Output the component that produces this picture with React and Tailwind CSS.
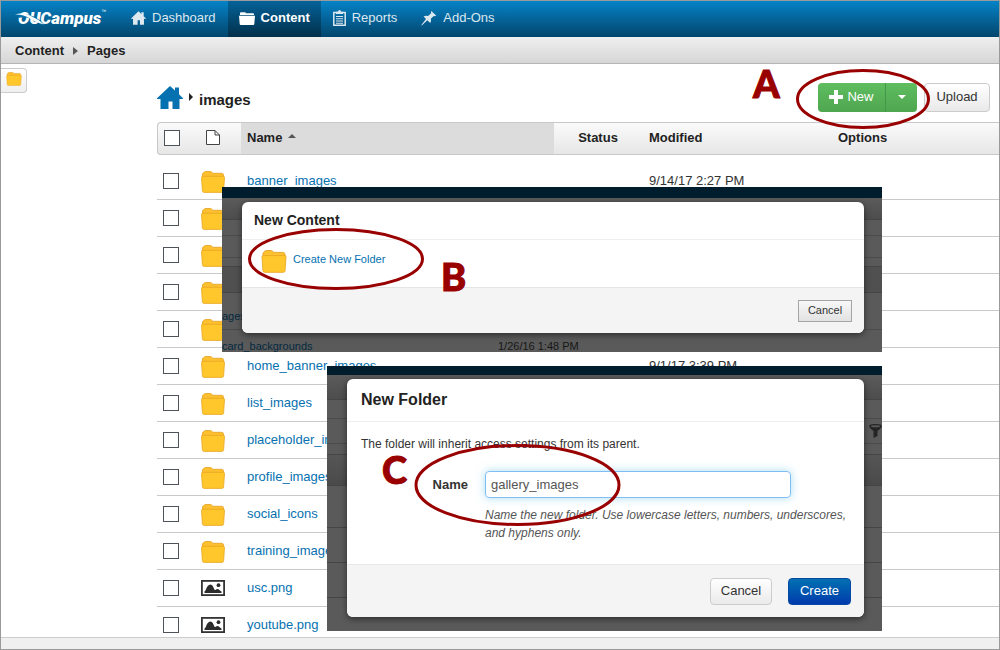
import React from "react";

const files = [
  { name: "banner_images", modified: "9/14/17 2:27 PM" },
  { name: "" },
  { name: "" },
  { name: "" },
  { name: "" },
  { name: "home_banner_images", modified: "9/1/17 3:39 PM" },
  { name: "list_images" },
  { name: "placeholder_images" },
  { name: "profile_images" },
  { name: "social_icons" },
  { name: "training_images" },
  { name: "usc.png", image: true },
  { name: "youtube.png", image: true },
];

function HomeIcon({ className }) {
  return (
    <svg viewBox="0 0 26 23" className={className} fill="currentColor" aria-hidden="true">
      <path d="M13 0 L18 4.6 V1.5 H22 V8.3 L26 12.2 V13 H22.5 V23 H15.5 V15.5 H11.5 V23 H3.5 V13 H0 V12.2 Z" />
    </svg>
  );
}

function SolidFolder({ className }) {
  return (
    <svg viewBox="0 0 16 13" className={className} fill="currentColor" aria-hidden="true">
      <path d="M1 3 V1.2 Q1 .3 2 .3 H6 Q6.8 .3 6.8 1.2 H14 Q15 1.2 15 2 V3 Z M0 3.8 H16 L15.3 12 Q15.2 13 14.2 13 H1.8 Q.8 13 .7 12 Z" />
    </svg>
  );
}

function ClipboardIcon({ className }) {
  return (
    <svg viewBox="0 0 13 16" className={className} aria-hidden="true">
      <path d="M.8 2.5 H12.2 V15.2 H.8 Z" fill="none" stroke="currentColor" strokeWidth="1.5" />
      <path d="M3 1.8 H5 Q5.2 0 6.5 0 Q7.800 0 8 1.8 H10 V4 H3 Z" fill="currentColor" />
      <path d="M3 6.500 H10 M3 8.800 H10 M3 11 H10 M3 13.200 H10" stroke="currentColor" strokeWidth="1.100" />
    </svg>
  );
}

function PinIcon({ className }) {
  return (
    <svg viewBox="0 0 16 15" className={className} fill="currentColor" aria-hidden="true">
      <path d="M10.300 0 L15.200 4.500 L13.600 5.200 L12.800 4.900 L9.800 7.800 Q10.600 10.200 9.200 12 L6.300 9.300 L1 14.300 L.3 14.600 L.7 13.600 L5 8 L2.600 5.600 Q4.600 4.200 7 5 L10.200 2.300 L9.900 1.400 Z" />
    </svg>
  );
}

function YellowFolder({ className }) {
  return (
    <svg viewBox="0 0 24 22" className={className} aria-hidden="true">
      <path
        d="M1.500 6 V3 Q1.500 2 2.700 1.800 L3.500 .8 Q4 .5 5 .5 H9.500 Q10.500 .5 11 1.500 L11.400 2.300 H20.500 Q22.500 2.300 22.500 4 V8 H1.500 Z"
        fill="#fdc02f"
        stroke="#e5a01f"
        strokeWidth=".8"
      />
      <path
        d="M.5 6.500 Q.4 5.300 1.700 5.300 H22.300 Q23.600 5.300 23.500 6.500 L22.600 19.800 Q22.400 21.400 20.900 21.400 H3.100 Q1.600 21.400 1.400 19.800 Z"
        fill="#ffc72c"
        stroke="#e8a623"
        strokeWidth=".8"
      />
    </svg>
  );
}

function ImageIcon({ className }) {
  return (
    <svg viewBox="0 0 24 16" className={className} aria-hidden="true">
      <rect x=".9" y=".9" width="22.200" height="14.200" fill="#fff" stroke="#333" strokeWidth="1.800" />
      <path d="M3.500 13 V11.500 Q5 10.500 5.500 8 Q6.500 5 9 4.500 Q11.500 4.500 12.500 7.500 Q13.300 10.300 14.500 10 Q16 8.300 17.500 9.300 Q19.500 11 20.500 11.500 V13 Z" fill="#2c2c2c" />
      <circle cx="17.500" cy="5.200" r="1.900" fill="#2c2c2c" />
    </svg>
  );
}

function Logo() {
  return (
    <a href="#" aria-label="OU Campus" className="relative flex h-[34px] w-[92px] items-center text-white">
      <span className="pl-[3px] font-['Roboto','Liberation_Sans',sans-serif] text-[17px] leading-none font-black italic">
        OUCampus
      </span>
      <span className="mb-3 text-[5px]">™</span>
      <svg viewBox="0 0 30 16" className="absolute top-2 left-0 h-4 w-[30px]" fill="none" aria-hidden="true">
        <path d="M3 7.500 Q15 4 27 15" stroke="#0570aa" strokeWidth="3" />
        <path d="M0 5.500 Q7 3 15 6.500 T29 15.500 Q20 13 14 9 T0 5.500" fill="#fff" />
      </svg>
    </a>
  );
}

const navItems = [
  { label: "Dashboard", icon: <HomeIcon className="h-[14px] w-[15px]" /> },
  { label: "Content", icon: <SolidFolder className="h-[13px] w-4" />, active: true },
  { label: "Reports", icon: <ClipboardIcon className="h-4 w-[13px]" /> },
  { label: "Add-Ons", icon: <PinIcon className="h-[15px] w-4" /> },
];

function Checkbox({ label }) {
  return (
    <input
      type="checkbox"
      aria-label={label}
      className="block size-4 appearance-none border border-[#4d5358] bg-white checked:bg-[#0671b0]"
    />
  );
}

function FileTable() {
  return (
    <table className="w-full table-fixed border-separate border-spacing-0 text-left text-[13px] leading-4">
      <colgroup>
        <col className="w-[33px]" />
        <col className="w-[51px]" />
        <col className="w-[313px]" />
        <col className="w-[88px]" />
        <col className="w-[196px]" />
        <col />
      </colgroup>
      <thead>
        <tr className="h-[33px] bg-linear-to-b from-[#fbfbfb] to-[#e6e6e6] [&>th]:border-y [&>th]:border-[#c8c8c8] [&>th]:px-0 [&>th]:pt-0 [&>th]:pb-0.5">
          <th className="rounded-l border-l">
            <div className="pl-1.5"><Checkbox label="Select all" /></div>
          </th>
          <th>
            <svg viewBox="0 0 14 15" className="ml-4 h-[15px] w-[14px]" fill="#fff" stroke="#444" aria-label="Type">
              <path d="M.5 .5 H9 L13.500 5 V14.500 H.5 Z M9 .5 V5 H13.500" />
            </svg>
          </th>
          <th className="bg-[#dcdcdc]">
            <div className="flex items-center gap-1.5 pl-1.5">
              Name
              <svg viewBox="0 0 8 4" className="mb-1 h-1 w-2" fill="#555" aria-hidden="true"><path d="M0 4 L4 0 L8 4 Z" /></svg>
            </div>
          </th>
          <th className="text-center">Status</th>
          <th><div className="pl-[7px]">Modified</div></th>
          <th>Options</th>
        </tr>
      </thead>
      <tbody className="text-[#333]">
        {files.map((file, i) => (
          <tr key={i} className={i === 0 ? "h-[45px] [&>td]:pt-2" : "h-[37px] [&>td]:pt-0"}>
            <td className="border-b border-[#c9c9c9] pr-0 pb-0 pl-1.5">
              <Checkbox label={`Select ${file.name || `row ${i + 1}`}`} />
            </td>
            <td className="border-b border-[#c9c9c9] pr-0 pb-0 pl-[11px]">
              {file.image ? <ImageIcon className="h-4 w-6" /> : <YellowFolder className="mt-0.5 h-[22px] w-6" />}
            </td>
            <td className="border-b border-[#c9c9c9] pr-0 pb-0 pl-1.5">
              {file.name && <a href="#" className="text-[#0671b0]">{file.name}</a>}
            </td>
            <td className="border-b border-[#c9c9c9]" />
            <td className="border-b border-[#c9c9c9] pr-0 pb-0 pl-[7px]">{file.modified}</td>
            <td className="border-b border-[#c9c9c9]" />
          </tr>
        ))}
      </tbody>
    </table>
  );
}

function NewContentPanel() {
  return (
    <div className="absolute top-[186px] left-[221px] h-[165px] w-[660px] overflow-hidden bg-[#5a5a5a]">
      <div className="absolute inset-0 flex flex-col text-[11px] leading-3" aria-hidden="true">
        <div className="h-[11px] bg-[#001d2e]" />
        <div className="h-[22px] border-b border-[#454545] bg-linear-to-b from-[#5b5b5b] to-[#4d4d4d]" />
        <div className="h-[17px] border-b border-[#4b4b4b]" />
        <div className="h-[22px] border-b border-[#4b4b4b]" />
        <div className="h-[9px] border-b border-[#454545]" />
        <div className="h-[27px] border-b border-[#454545] bg-[#505050]" />
        <div className="flex h-[37px] items-end border-b border-[#4b4b4b] pb-[7px] text-[#04293f]">ages</div>
        <div className="flex pt-2.5 text-[#04293f]">
          <span className="w-[276px]">card_backgrounds</span>
          <span className="text-[#161616]">1/26/16 1:48 PM</span>
        </div>
      </div>
      <section role="dialog" aria-label="New Content" className="relative mt-[15px] mr-[18px] ml-5 flex h-[131px] flex-col overflow-hidden rounded-md bg-white shadow-[0_2px_6px_rgba(0,0,0,0.5)]">
        <h2 className="flex h-[38px] items-center border-b border-[#eee] pl-3 text-[14px] font-bold">New Content</h2>
        <div className="flex h-[47px] items-center gap-1.5 pb-2 pl-[19px]">
          <YellowFolder className="mt-1 h-[23px] w-[26px] shrink-0" />
          <a href="#" className="text-[11px] text-[#0671b0]">Create New Folder</a>
        </div>
        <footer className="flex flex-1 items-center justify-end border-t border-[#e5e5e5] bg-[#f4f4f4] pr-3">
          <button className="h-[22px] w-[54px] border border-[#a5a5a5] bg-linear-to-b from-[#f8f8f8] to-[#e2e2e2] text-[11px] leading-none text-[#333]">Cancel</button>
        </footer>
      </section>
    </div>
  );
}

function NewFolderPanel() {
  return (
    <div className="absolute top-[365px] left-[326px] h-[265px] w-[555px] overflow-hidden bg-[#5a5a5a]">
      <div className="absolute inset-0 flex flex-col" aria-hidden="true">
        <div className="h-[9px] bg-[#001d2e]" />
        <div className="h-[25px] border-b border-[#454545] bg-linear-to-b from-[#5b5b5b] to-[#4d4d4d]" />
        <div className="h-[19px] border-b border-[#4b4b4b]" />
        <div className="flex h-[25px] items-center justify-end border-b border-[#4b4b4b]">
          <svg viewBox="0 0 13 14" className="h-[14px] w-[13px]">
            <path d="M.3 2 Q0 0 6.500 0 T12.700 2 Q13 3.500 8.500 7 V12 L4.500 14 V7 Q0 3.500 .3 2 Z" fill="#242424" />
            <ellipse cx="6.500" cy="2.200" rx="4.600" ry="1" fill="#5a5a5a" />
          </svg>
        </div>
        <div className="h-[11px] border-b border-[#454545]" />
        <div className="h-[31px] border-b border-[#454545] bg-linear-to-b from-[#565656] to-[#4a4a4a]" />
        <div className="h-[42px] border-b border-[#454545]" />
        <div className="h-[35px] border-b border-[#454545]" />
        <div className="h-[35px] border-b border-[#454545]" />
      </div>
      <section role="dialog" aria-label="New Folder" className="relative mt-[13px] mr-[18px] ml-5 flex h-[238px] flex-col overflow-hidden rounded-md bg-white shadow-[0_2px_6px_rgba(0,0,0,0.5)]">
        <h2 className="flex h-[43px] items-center border-b border-[#eee] pl-[14px] text-[16px] font-bold">New Folder</h2>
        <div className="flex h-[142px] flex-col pt-[13px] pl-[14px] text-[12px] text-[#333]">
          <p className="leading-[18px]">The folder will inherit access settings from its parent.</p>
          <div className="mt-[18px] flex items-center">
            <label htmlFor="folder-name" className="w-[124px] pr-[17px] text-right text-[13px] font-bold">Name</label>
            <input
              id="folder-name"
              type="text"
              defaultValue="gallery_images"
              className="h-[27px] w-[306px] rounded border border-[#80bdf0] px-[5px] text-[13px] text-[#555] shadow-[0_0_8px_rgba(82,190,236,0.5)] outline-none"
            />
          </div>
          <p className="mt-2 ml-[124px] w-[370px] leading-[18px] text-[#555] italic">
            Name the new folder. Use lowercase letters, numbers, underscores, and hyphens only.
          </p>
        </div>
        <footer className="flex flex-1 items-center justify-end gap-4 border-t border-[#e8e8e8] bg-[#f4f4f4] pr-[13px]">
          <button className="h-[27px] w-[62px] rounded border border-[#ccc] bg-linear-to-b from-white to-[#eaeaea] text-[13px] text-[#333]">Cancel</button>
          <button className="h-[27px] w-[63px] rounded border border-[#0549a5] bg-linear-to-b from-[#0770b2] to-[#0339ab] text-[13px] text-white">Create</button>
        </footer>
      </section>
    </div>
  );
}

function Callouts() {
  return (
    <div className="pointer-events-none absolute -inset-px font-['Lato',sans-serif] text-[38px] leading-7 font-black text-[#900] [-webkit-text-stroke:1px_#990000]">
      <svg className="absolute inset-0 size-full" fill="none" stroke="#990000" strokeWidth="3" aria-hidden="true">
        <ellipse cx="863" cy="99" rx="65.500" ry="28.500" />
        <ellipse cx="336" cy="259" rx="86.500" ry="29.500" />
        <ellipse cx="517.500" cy="485" rx="101.500" ry="39.500" />
      </svg>
      <span className="absolute top-[69px] left-[753px]">A</span>
      <span className="absolute top-[262px] left-[441px]">B</span>
      <span className="absolute top-[455px] left-[382px]">C</span>
    </div>
  );
}

export default function App() {
  return (
    <div className="relative flex h-screen flex-col overflow-hidden border border-[#9a9a9a] bg-white font-['Liberation_Sans',Arial,sans-serif] text-[#222]">
      <header className="flex h-9 shrink-0 bg-linear-to-b from-[#0583c8] to-[#03466d] pl-[14px]">
        <Logo />
        <nav className="ml-3 flex text-[13px] text-[#dde8ef]">
          {navItems.map((item) => (
            <a
              key={item.label}
              href="#"
              className={
                item.active
                  ? "flex items-center gap-1.5 bg-linear-to-b from-[#04639a] to-[#02304b] px-[11px] pb-0.5 font-bold text-white"
                  : "flex items-center gap-1.5 px-3 pb-0.5"
              }
            >
              {item.icon}
              {item.label}
            </a>
          ))}
        </nav>
      </header>
      <div className="flex h-[27px] shrink-0 items-center gap-[9px] border-b border-[#b5b5b5] bg-linear-to-b from-[#efefef] to-[#d6d6d6] pt-0.5 pl-[14px] text-[13px] font-bold">
        <span>Content</span>
        <svg viewBox="0 0 5 8" className="h-2 w-[5px]" fill="#555" aria-hidden="true"><path d="M0 0 L5 4 L0 8 Z" /></svg>
        <span>Pages</span>
      </div>
      <main className="flex min-h-0 flex-1">
        <aside className="w-[156px] shrink-0 pt-1">
          <button aria-label="Files" className="flex h-[25px] w-[26px] items-center justify-center rounded-r border border-l-0 border-[#ccc] bg-linear-to-b from-white to-[#efefef] pb-1">
            <YellowFolder className="h-[14px] w-4" />
          </button>
        </aside>
        <section className="min-w-0 flex-1 overflow-hidden">
          <div className="flex h-[58px] items-center justify-between pt-2 pr-[9px]">
            <div className="flex items-center gap-1.5 text-[15px] font-bold">
              <a href="#" aria-label="Home" className="text-[#0671b0]"><HomeIcon className="h-[23px] w-[26px]" /></a>
              <svg viewBox="0 0 4 8" className="h-2 w-1" fill="#222" aria-hidden="true"><path d="M0 0 L4 4 L0 8 Z" /></svg>
              <h1 className="pt-1.5">images</h1>
            </div>
            <div className="flex items-center gap-[7px] text-[13px]">
              <div className="flex h-[29px] overflow-hidden rounded bg-linear-to-b from-[#5fbd5f] to-[#4fa64f] text-white">
                <button className="flex w-[68px] items-center justify-center gap-1 border-r border-[#44974a]">
                  <svg viewBox="0 0 14 14" className="h-[14px] w-[14px]" fill="currentColor" aria-hidden="true"><path d="M5 0 H9 V5 H14 V9 H9 V14 H5 V9 H0 V5 H5 Z" /></svg>
                  New
                </button>
                <button aria-label="More new options" className="flex w-[31px] items-center justify-center">
                  <svg viewBox="0 0 8 4" className="h-1 w-2" fill="currentColor" aria-hidden="true"><path d="M0 0 H8 L4 4 Z" /></svg>
                </button>
              </div>
              <button className="h-[29px] w-[66px] rounded border border-[#ccc] bg-linear-to-b from-white to-[#e9e9e9] text-[#333]">Upload</button>
            </div>
          </div>
          <FileTable />
        </section>
      </main>
      <footer className="h-3 shrink-0 border-t border-[#ccc] bg-[#f0f0f0]" />
      <NewContentPanel />
      <NewFolderPanel />
      <Callouts />
    </div>
  );
}
